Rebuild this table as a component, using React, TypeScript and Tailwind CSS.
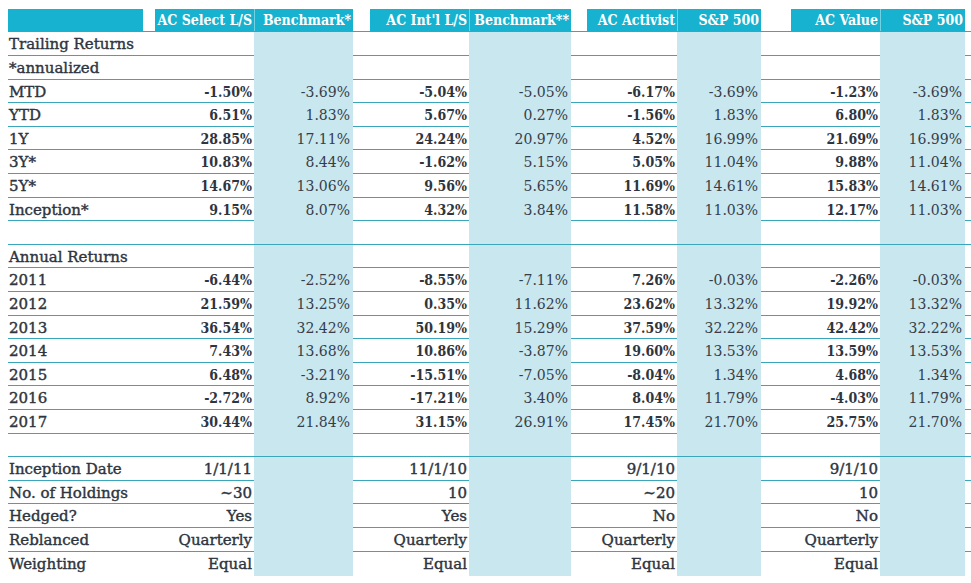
import React from "react";

const FONT = "font-['DejaVu_Serif_Condensed','DejaVu_Serif',serif]";
const GRID =
  "grid grid-cols-[135px_12px_99px_99px_17px_99px_102px_16px_90px_84px_30px_89px_85px]";
const LABEL =
  "font-['DejaVu_Serif',serif] text-[15px] text-[#2e3540] [-webkit-text-stroke:0.4px_#2e3540]";

const headers: [string, string][] = [
  ["AC Select L/S", "Benchmark*"],
  ["AC Int'l L/S", "Benchmark**"],
  ["AC Activist", "S&P 500"],
  ["AC Value", "S&P 500"],
];

type Row = { label: string; values?: string[]; info?: boolean; last?: boolean };

const rows: Row[] = [
  { label: "Trailing Returns" },
  { label: "*annualized" },
  { label: "MTD", values: ["-1.50%", "-3.69%", "-5.04%", "-5.05%", "-6.17%", "-3.69%", "-1.23%", "-3.69%"] },
  { label: "YTD", values: ["6.51%", "1.83%", "5.67%", "0.27%", "-1.56%", "1.83%", "6.80%", "1.83%"] },
  { label: "1Y", values: ["28.85%", "17.11%", "24.24%", "20.97%", "4.52%", "16.99%", "21.69%", "16.99%"] },
  { label: "3Y*", values: ["10.83%", "8.44%", "-1.62%", "5.15%", "5.05%", "11.04%", "9.88%", "11.04%"] },
  { label: "5Y*", values: ["14.67%", "13.06%", "9.56%", "5.65%", "11.69%", "14.61%", "15.83%", "14.61%"] },
  { label: "Inception*", values: ["9.15%", "8.07%", "4.32%", "3.84%", "11.58%", "11.03%", "12.17%", "11.03%"] },
  { label: "" },
  { label: "Annual Returns" },
  { label: "2011", values: ["-6.44%", "-2.52%", "-8.55%", "-7.11%", "7.26%", "-0.03%", "-2.26%", "-0.03%"] },
  { label: "2012", values: ["21.59%", "13.25%", "0.35%", "11.62%", "23.62%", "13.32%", "19.92%", "13.32%"] },
  { label: "2013", values: ["36.54%", "32.42%", "50.19%", "15.29%", "37.59%", "32.22%", "42.42%", "32.22%"] },
  { label: "2014", values: ["7.43%", "13.68%", "10.86%", "-3.87%", "19.60%", "13.53%", "13.59%", "13.53%"] },
  { label: "2015", values: ["6.48%", "-3.21%", "-15.51%", "-7.05%", "-8.04%", "1.34%", "4.68%", "1.34%"] },
  { label: "2016", values: ["-2.72%", "8.92%", "-17.21%", "3.40%", "8.04%", "11.79%", "-4.03%", "11.79%"] },
  { label: "2017", values: ["30.44%", "21.84%", "31.15%", "26.91%", "17.45%", "21.70%", "25.75%", "21.70%"] },
  { label: "" },
  { label: "Inception Date", info: true, values: ["1/1/11", "", "11/1/10", "", "9/1/10", "", "9/1/10", ""] },
  { label: "No. of Holdings", info: true, values: ["~30", "", "10", "", "~20", "", "10", ""] },
  { label: "Hedged?", info: true, values: ["Yes", "", "Yes", "", "No", "", "No", ""] },
  { label: "Reblanced", info: true, values: ["Quarterly", "", "Quarterly", "", "Quarterly", "", "Quarterly", ""] },
  { label: "Weighting", info: true, values: ["Equal", "", "Equal", "", "Equal", "", "Equal", ""], last: true },
];

function HeaderRow() {
  return (
    <div className={`${GRID} h-[23px] border-b border-[#3aa6bb]`}>
      <div className="bg-[#17b2cf]" />
      {headers.map(([fund, bench], g) => (
        <React.Fragment key={g}>
          <div />
          <div className="flex items-center justify-end bg-[#17b2cf] pr-[2px] text-[14px] font-bold text-white">
            {fund}
          </div>
          <div className="flex items-center justify-end border-l border-white/40 bg-[#17b2cf] pr-[2px] text-[14px] font-bold text-white">
            {bench}
          </div>
        </React.Fragment>
      ))}
    </div>
  );
}

function BodyRow({ row, index }: { row: Row; index: number }) {
  // 24/24/23/24/23 keeps the 23.6px pitch while lines stay on whole pixels
  const height = index % 5 === 2 || index % 5 === 4 ? "h-[23px]" : "h-[24px]";
  const fundText = row.info
    ? LABEL
    : "text-[14px] font-bold text-[#2e3540]";
  return (
    <div className={`${GRID} ${height} ${row.last ? "" : "border-b border-[#3aa6bb]"}`}>
      <div className={`flex items-center pl-px pt-px ${LABEL}`}>{row.label}</div>
      {headers.map((_, g) => (
        <React.Fragment key={g}>
          <div />
          <div className={`flex items-center justify-end pr-[2px] pt-px ${fundText}`}>
            {row.values?.[g * 2] ?? ""}
          </div>
          <div className="flex items-center justify-end bg-[#c9e7ef] pr-[3px] pt-px font-['DejaVu_Serif',serif] text-[14px] text-[#353d4a]">
            {row.values?.[g * 2 + 1] ?? ""}
          </div>
        </React.Fragment>
      ))}
    </div>
  );
}

export default function App() {
  return (
    <div className={`h-[583px] w-[971px] overflow-hidden bg-white pl-[8px] pt-[9px] ${FONT}`}>
      <HeaderRow />
      {rows.map((row, i) => (
        <BodyRow key={i} row={row} index={i} />
      ))}
    </div>
  );
}
